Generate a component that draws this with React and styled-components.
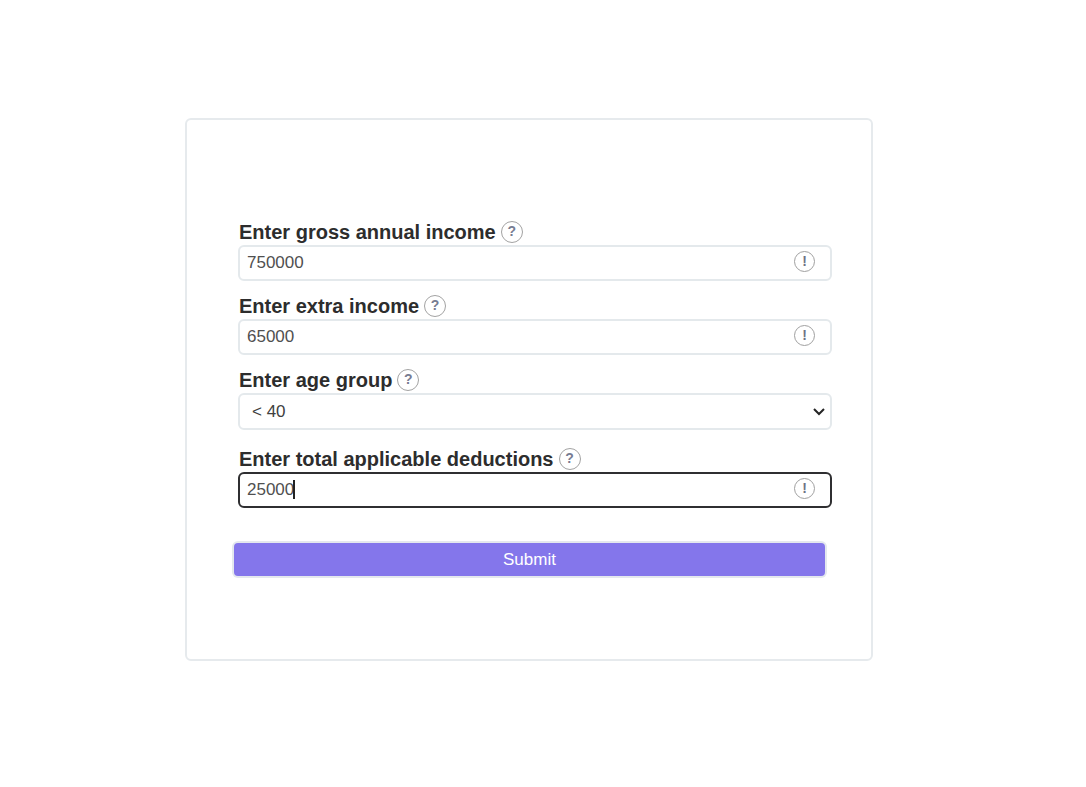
import React, { useState } from "react";
import styled, { createGlobalStyle } from "styled-components";

const GlobalStyle = createGlobalStyle`
  *, *::before, *::after { box-sizing: border-box; }
  body {
    margin: 0;
    background: #fff;
    color: #2d2d2d;
    font-family: "Liberation Sans", Arial, sans-serif;
  }
`;

const Page = styled.main`
  display: flex;
  justify-content: center;
  min-height: 100vh;
  align-items: flex-start;
  padding: 118px 44px 16px 16px;
`;

const Card = styled.form`
  display: flex;
  flex-direction: column;
  gap: 12px;
  width: 100%;
  max-width: 688px;
  padding: 99px 39px 83px 51px;
  border: 2px solid #e6eaed;
  border-radius: 6px;
`;

const FieldGroup = styled.div`
  display: flex;
  flex-direction: column;
  margin-bottom: ${(p) => (p.$spaced ? "4px" : "0")};
`;

const LabelRow = styled.div`
  display: flex;
  align-items: center;
  gap: 5px;
  height: 26px;
  padding-left: 1px;
`;

const Label = styled.label`
  font-size: 20px;
  font-weight: 700;
  line-height: 24px;
`;

const HelpButton = styled.button`
  display: grid;
  place-items: center;
  width: 22px;
  height: 22px;
  padding: 0 0 2px;
  border: 1px solid #a3a3a3;
  border-radius: 50%;
  background: #fff;
  color: #777c92;
  font: 700 14px/18px "Liberation Sans", Arial, sans-serif;
`;

const Control = styled.div`
  position: relative;
  font-size: 17px;
`;

const Input = styled.input`
  display: block;
  width: 100%;
  height: 36px;
  padding: 0 44px 0 7px;
  border: 2px solid ${(p) => (p.$active ? "#2f2f31" : "#e4e9ec")};
  border-radius: 6px;
  outline: none;
  background: #fff;
  color: #505050;
  caret-color: transparent;
  font: 17px/20px "Liberation Sans", Arial, sans-serif;
`;

const Select = styled.select`
  display: block;
  width: 100%;
  height: 37px;
  padding: 0 32px 0 12px;
  border: 2px solid #e4e9ec;
  border-radius: 6px;
  outline: none;
  appearance: none;
  background: #fff;
  color: #404040;
  font: 17px/20px "Liberation Sans", Arial, sans-serif;
`;

const Chevron = styled.svg`
  position: absolute;
  top: 14px;
  right: 7px;
  width: 12px;
  height: 9px;
  pointer-events: none;
`;

const Alert = styled.span`
  position: absolute;
  top: 6px;
  right: 17px;
  display: grid;
  place-items: center;
  width: 21px;
  height: 21px;
  padding-bottom: 1px;
  border: 1px solid #a0a0a0;
  border-radius: 50%;
  color: #6f7385;
  font-size: 14px;
  font-weight: 700;
  line-height: 18px;
`;

const Caret = styled.span`
  position: absolute;
  top: 8px;
  width: 2px;
  height: 19px;
  background: #222;
  pointer-events: none;
`;

const Submit = styled.button`
  height: 33px;
  margin: 23px 7px 0 -4px;
  padding: 0;
  border: 0;
  border-radius: 4px;
  background: #8476eb;
  box-shadow: 0 0 0 2px #e4e8ee;
  color: #fff;
  font: 17px/20px "Liberation Sans", Arial, sans-serif;
`;

function FieldLabel({ id, children }) {
  return (
    <LabelRow>
      <Label htmlFor={id}>{children}</Label>
      <HelpButton type="button">?</HelpButton>
    </LabelRow>
  );
}

function NumberField({ id, label, initial, active }) {
  const [value, setValue] = useState(initial);
  return (
    <FieldGroup>
      <FieldLabel id={id}>{label}</FieldLabel>
      <Control>
        <Input
          id={id}
          type="text"
          inputMode="numeric"
          value={value}
          $active={active}
          onChange={(e) => setValue(e.target.value)}
        />
        {active && <Caret style={{ left: `calc(8px + ${value.length}ch)` }} />}
        <Alert>!</Alert>
      </Control>
    </FieldGroup>
  );
}

export default function App() {
  return (
    <>
      <GlobalStyle />
      <Page>
        <Card onSubmit={(e) => e.preventDefault()}>
          <NumberField id="gross" label="Enter gross annual income" initial="750000" />
          <NumberField id="extra" label="Enter extra income" initial="65000" />
          <FieldGroup $spaced>
            <FieldLabel id="age">Enter age group</FieldLabel>
            <Control>
              <Select id="age" defaultValue="under40">
                <option value="under40">&lt; 40</option>
                <option value="mid">≥ 40 &amp; &lt; 60</option>
                <option value="over60">≥ 60</option>
              </Select>
              <Chevron viewBox="0 0 12 9" aria-hidden="true">
                <path d="M1 2l5 5 5-5" fill="none" stroke="#252525" strokeWidth="2" />
              </Chevron>
            </Control>
          </FieldGroup>
          <NumberField
            id="deductions"
            label="Enter total applicable deductions"
            initial="25000"
            active
          />
          <Submit type="submit">Submit</Submit>
        </Card>
      </Page>
    </>
  );
}
